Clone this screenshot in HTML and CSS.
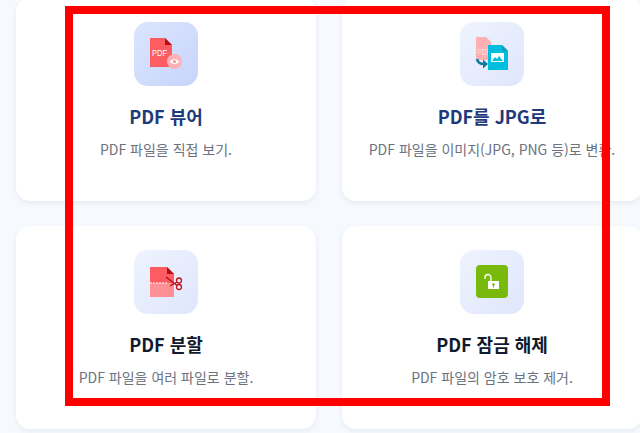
FILE: index.html
```html
<!DOCTYPE html>
<html lang="ko">
<head>
  <meta charset="UTF-8">
  <meta name="viewport" content="width=device-width, initial-scale=1.0">
  <title>PDF 도구</title>
  <link rel="stylesheet" href="styles.css">
</head>
<body>
  <div class="tools">
    <a class="card">
      <div class="tile tile-strong">
        <svg class="icon" viewBox="0 0 64 64">
          <path d="M16 16h15l7 7v22H16z" fill="#fd5c63"/>
          <path d="M31 16l7 7h-7z" fill="#b80d16"/>
          <text x="18" y="34" class="pdf-label" textLength="15" lengthAdjust="spacingAndGlyphs">PDF</text>
          <circle cx="40.500" cy="39.500" r="7.500" fill="#fdb1b4"/>
          <path d="M35.500 39.500q5-5 10 0q-5 5-10 0z" fill="#fff"/>
          <circle cx="40.500" cy="39.500" r="1.600" fill="#fd8f94"/>
        </svg>
      </div>
      <h3 class="title title-blue">PDF 뷰어</h3>
      <p class="desc">PDF 파일을 직접 보기.</p>
    </a>
    <a class="card">
      <div class="tile">
        <svg class="icon" viewBox="0 0 64 64">
          <path d="M16 15h10l5 5v18H16z" fill="#feb0b2"/>
          <text x="17.500" y="33" class="pdf-label pdf-label-faint" textLength="13" lengthAdjust="spacingAndGlyphs">PDF</text>
          <path d="M28 23h14l6 6v19H28z" fill="#00bcdd"/>
          <path d="M42 23l6 6h-6z" fill="#0a9dbc"/>
          <rect x="31" y="31" width="13" height="9" fill="#fff"/>
          <path d="M32 39l3-4 2 2 2-3 4 5z" fill="#00bcdd"/>
          <path d="M17 37q1 5 7 5" fill="none" stroke="#0e7c9a" stroke-width="2.600"/>
          <path d="M23 37.500l5 4.500-5 4.500z" fill="#0e7c9a"/>
        </svg>
      </div>
      <h3 class="title title-blue">PDF를 JPG로</h3>
      <p class="desc">PDF 파일을 이미지(JPG, PNG 등)로 변환.</p>
    </a>
    <a class="card">
      <div class="tile">
        <svg class="icon" viewBox="0 0 64 64">
          <path d="M16 17h17l7 7v9H16z" fill="#fd5c63"/>
          <path d="M16 33h24v14H16z" fill="#fe8f94"/>
          <path d="M33 17l7 7h-7z" fill="#b80d16"/>
          <path d="M16 33h17" stroke="#fff" stroke-width="1" stroke-dasharray="2 1"/>
          <path d="M32 27l11 8.500M36 36l7-4" fill="none" stroke="#b80d16" stroke-width="1.400"/>
          <circle cx="45" cy="30.500" r="2.500" fill="none" stroke="#c8101a" stroke-width="1.300"/>
          <circle cx="45" cy="37" r="2.500" fill="none" stroke="#c8101a" stroke-width="1.300"/>
        </svg>
      </div>
      <h3 class="title">PDF 분할</h3>
      <p class="desc">PDF 파일을 여러 파일로 분할.</p>
    </a>
    <a class="card">
      <div class="tile">
        <svg class="icon" viewBox="0 0 64 64">
          <rect x="16" y="15" width="32" height="33" rx="4" fill="#78b90c"/>
          <path d="M25 29v-1.500a3 3 0 0 1 6 0v4" fill="none" stroke="#fff" stroke-width="1.300"/>
          <rect x="28" y="31" width="11" height="8" fill="#fff"/>
          <circle cx="33.500" cy="34.500" r="1.300" fill="#78b90c"/>
          <rect x="33" y="35" width="1" height="2.500" fill="#78b90c"/>
        </svg>
      </div>
      <h3 class="title">PDF 잠금 해제</h3>
      <p class="desc">PDF 파일의 암호 보호 제거.</p>
    </a>
  </div>
  <!-- 红框盖在内容上面 -->
  <div class="frame"></div>
</body>
</html>
```

FILE: styles.css
```css
html, body {
  margin: 0;
  width: 640px;
  height: 433px;
  overflow: hidden;
}
body {
  position: relative;
  background: #f6f9fd;
  font-family: "Noto Sans CJK KR", "Noto Sans", sans-serif;
}
.tools {
  display: grid;
  grid-template-columns: 300px 300px;
  grid-auto-rows: 203px;
  gap: 25px 26px;
  margin: -2px 0 0 16px;
}
.card {
  display: flex;
  flex-direction: column;
  align-items: center;
  padding-top: 24px;
  box-sizing: border-box;
  background: #fff;
  border-radius: 14px;
  box-shadow: 0 2px 5px rgba(120, 140, 180, 0.12);
}
.tile {
  width: 64px;
  height: 64px;
  border-radius: 14px;
  background: linear-gradient(135deg, #eef3fe, #e0e6fc);
}
.tile-strong {
  background: linear-gradient(135deg, #dae5fd, #c8d5fb);
}
.icon {
  display: block;
  width: 64px;
  height: 64px;
}
.pdf-label {
  font-family: "Liberation Sans", sans-serif;
  font-size: 9px;
  font-weight: 400;
  fill: #fff;
}
.pdf-label-faint {
  fill: #ffdcdd;
}
.title {
  margin: 17px 0 0;
  font-size: 18px;
  line-height: 26px;
  font-weight: 700;
  color: #111a2e;
  white-space: nowrap;
}
.title-blue {
  color: #1e3a7b;
}
.desc {
  margin: 10px 0 0;
  font-size: 14px;
  line-height: 20px;
  color: #6b7280;
  white-space: nowrap;
}
.frame {
  position: absolute;
  left: 65px;
  top: 6px;
  width: 545px;
  height: 400px;
  box-sizing: border-box;
  border: 8px solid #ff0000;
}
```
